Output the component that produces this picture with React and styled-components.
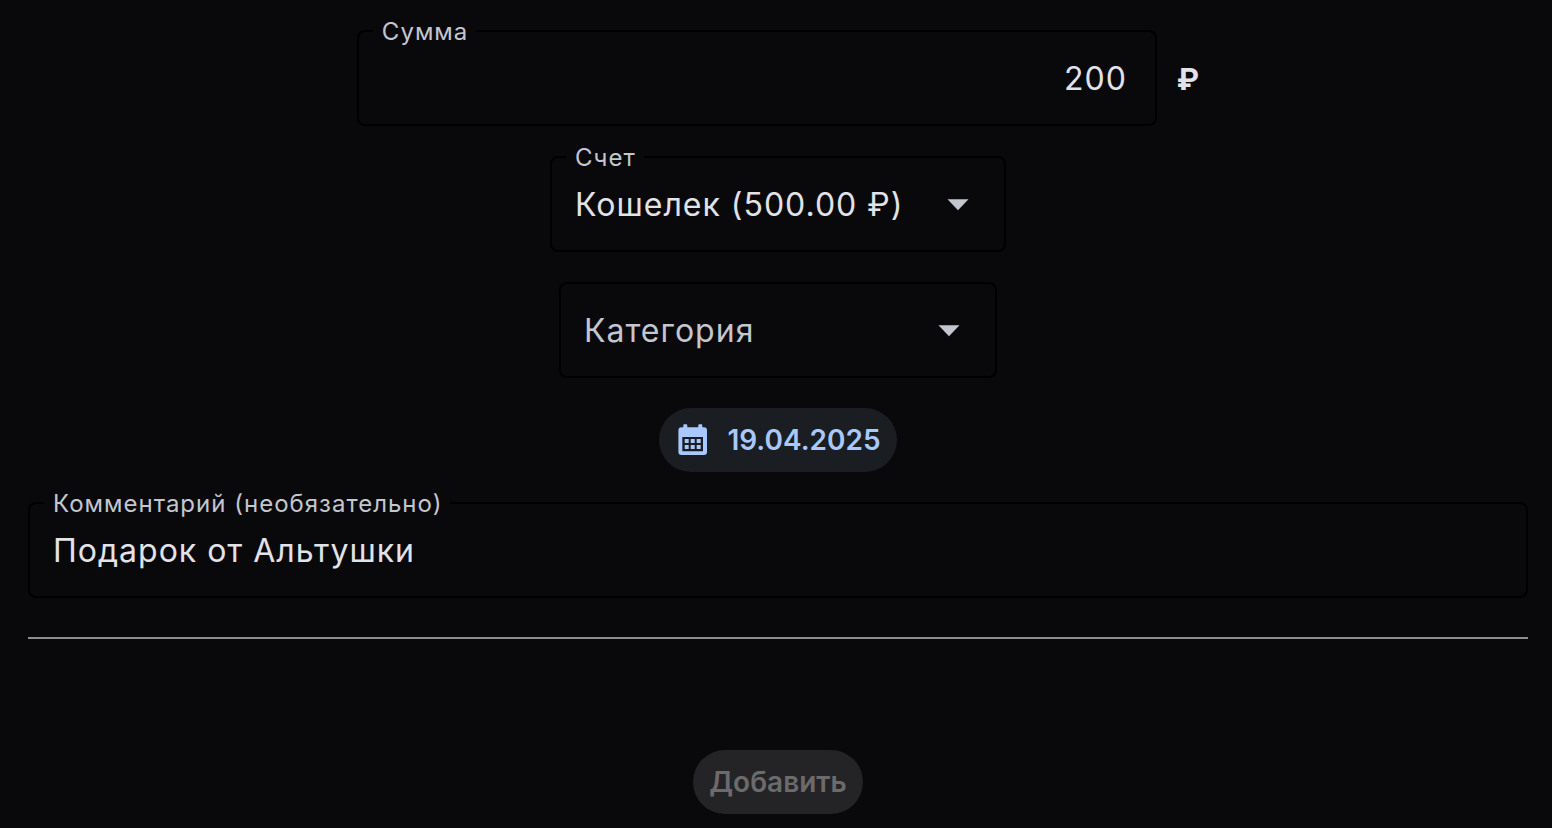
import React, { useState } from "react";
import styled, { createGlobalStyle } from "styled-components";

const colors = {
  page: "#09090b",
  outline: "#000000",
  text: "#e2e2e9",
  muted: "#c3c6cf",
  accent: "#a8c8ff",
  chip: "#1a1d21",
  divider: "#8e8e8e",
  disabled: "#242426",
  disabledText: "#6b6b6e",
};

const GlobalStyle = createGlobalStyle`
  * { box-sizing: border-box; }
  body {
    margin: 0;
    background: ${colors.page};
    color: ${colors.text};
    font-family: Inter, "Liberation Sans", sans-serif;
  }
`;

const Form = styled.form`
  display: flex;
  flex-direction: column;
  align-items: center;
  gap: 30px;
  padding: 30px 24px 14px 28px;
`;

const AmountRow = styled.div`
  display: flex;
  align-items: center;
  justify-content: center;
  gap: 20px;
  width: 100%;
`;

const Currency = styled.span`
  padding-top: 2px;
  font-size: 30px;
  line-height: 40px;
  font-weight: 700;
`;

const Field = styled.div`
  position: relative;
  display: flex;
  width: 100%;
  max-width: ${(p) => p.$width || "none"};
  height: 96px;
  border: 2px solid ${colors.outline};
  border-radius: 8px;
`;

const FieldLabel = styled.label`
  position: absolute;
  top: -16px;
  left: 14px;
  padding: 0 8px 0 9px;
  background: ${colors.page};
  color: ${colors.muted};
  font-size: 24px;
  line-height: 32px;
  letter-spacing: 1px;
  white-space: nowrap;
`;

const controlText = `
  flex: 1;
  width: 100%;
  min-width: 0;
  margin: 0;
  border: 0;
  outline: 0;
  background: transparent;
  font: 400 32px/40px Inter, "Liberation Sans", sans-serif;
  letter-spacing: 1px;
`;

const TextInput = styled.input`
  ${controlText}
  padding: 2px ${(p) => (p.$align === "right" ? 28 : 23)}px 0 23px;
  color: ${colors.text};
  text-align: ${(p) => p.$align || "left"};
`;

const Select = styled.select`
  ${controlText}
  appearance: none;
  padding: 2px 72px 0 23px;
  color: ${(p) => (p.$empty ? colors.muted : colors.text)};
`;

const Arrow = styled.svg`
  position: absolute;
  top: 50%;
  right: 34px;
  width: 24px;
  height: 12px;
  margin-top: -5px;
  fill: ${colors.muted};
  pointer-events: none;
`;

const PillButton = styled.button`
  display: flex;
  align-items: center;
  gap: 16px;
  height: 64px;
  padding: 0 16px;
  border: 0;
  border-radius: 32px;
  background: ${colors.chip};
  color: ${colors.accent};
  font: 600 28px/40px Inter, "Liberation Sans", sans-serif;

  &:disabled {
    background: ${colors.disabled};
    color: ${colors.disabledText};
  }
`;

const Divider = styled.hr`
  width: 100%;
  height: 2px;
  margin: 9px 0;
  border: 0;
  background: ${colors.divider};
`;

const Actions = styled.div`
  padding-top: 72px;
`;

function CalendarIcon() {
  return (
    <svg width="36" height="36" viewBox="0 0 36 36" fill="currentColor" aria-hidden="true">
      <path
        fillRule="evenodd"
        d="M8.3 5.3V3.6c0-.8.5-1.3 1.2-1.3h1.6c.7 0 1.2.5 1.2 1.3V5.3H23.3V3.6c0-.8.5-1.3 1.2-1.3h1.6c.7 0 1.2.5 1.2 1.3V5.3H29a3 3 0 0 1 3 3V30a3 3 0 0 1-3 3H6.4a3 3 0 0 1-3-3V8.3a3 3 0 0 1 3-3ZM7.3 15V29.3H28V15Z"
      />
      {[17, 23].map((y) =>
        [9.7, 15.7, 21.7].map((x) => (
          <rect key={`${x}-${y}`} x={x} y={y} width="4" height="4" rx="0.6" />
        ))
      )}
    </svg>
  );
}

function SelectField({ id, label, floating, width, value, onChange, children }) {
  return (
    <Field $width={width}>
      {floating && <FieldLabel htmlFor={id}>{label}</FieldLabel>}
      <Select
        id={id}
        aria-label={floating ? undefined : label}
        $empty={!value}
        value={value}
        onChange={(e) => onChange(e.target.value)}
      >
        {children}
      </Select>
      <Arrow viewBox="0 0 24 12" aria-hidden="true">
        <path d="M1.5 .3h21L12 11.2Z" />
      </Arrow>
    </Field>
  );
}

export default function App() {
  const [amount, setAmount] = useState("200");
  const [account, setAccount] = useState("wallet");
  const [category, setCategory] = useState("");
  const [comment, setComment] = useState("Подарок от Альтушки");

  return (
    <>
      <GlobalStyle />
      <Form onSubmit={(e) => e.preventDefault()}>
        <AmountRow>
          <Field $width="800px">
            <FieldLabel htmlFor="amount">Сумма</FieldLabel>
            <TextInput
              id="amount"
              inputMode="decimal"
              $align="right"
              value={amount}
              onChange={(e) => setAmount(e.target.value)}
            />
          </Field>
          <Currency>₽</Currency>
        </AmountRow>
        <SelectField
          id="account"
          label="Счет"
          floating
          width="456px"
          value={account}
          onChange={setAccount}
        >
          <option value="wallet">Кошелек (500.00 ₽)</option>
        </SelectField>
        <SelectField
          id="category"
          label="Категория"
          width="438px"
          value={category}
          onChange={setCategory}
        >
          <option value="">Категория</option>
        </SelectField>
        <PillButton type="button">
          <CalendarIcon />
          19.04.2025
        </PillButton>
        <Field>
          <FieldLabel htmlFor="comment">Комментарий (необязательно)</FieldLabel>
          <TextInput id="comment" value={comment} onChange={(e) => setComment(e.target.value)} />
        </Field>
        <Divider />
        <Actions>
          <PillButton type="submit" disabled>
            Добавить
          </PillButton>
        </Actions>
      </Form>
    </>
  );
}
